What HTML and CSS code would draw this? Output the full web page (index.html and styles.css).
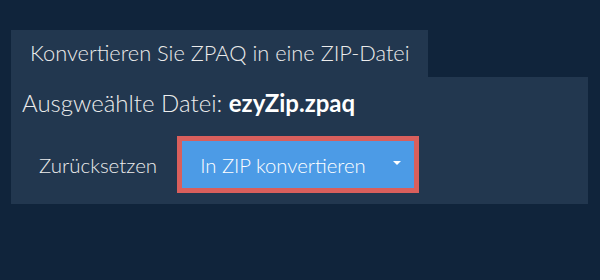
FILE: index.html
```html
<!DOCTYPE html>
<html lang="de">
<head>
<meta charset="utf-8">
<link rel="stylesheet" href="styles.css">
</head>
<body>
<div class="page">
  <div class="tab">Konvertieren Sie ZPAQ in eine ZIP-Datei</div>
  <div class="panel">
    <div class="file">Ausgweählte Datei: <b>ezyZip.zpaq</b></div>
    <div class="actions">
      <span class="reset">Zurücksetzen</span>
      <span class="convert"><span class="label">In ZIP konvertieren</span><span class="caret"></span></span>
    </div>
  </div>
</div>
</body>
</html>
```
FILE: styles.css
```css
html, body {
  margin: 0;
  background: #10243b;
  font-family: Lato, "Noto Sans", sans-serif;
  font-weight: 300;
  color: #ececec;
}
.page {
  padding: 30px 0 0 11px;
}
.tab {
  display: inline-block;
  height: 47px;
  line-height: 45px;
  padding: 0 18px 0 19px;
  font-size: 21.8px;
  background: #22374f;
}
.panel {
  width: 566px;
  height: 116px;
  padding: 0 0 11px 11px;
  background: #22374f;
}
.file {
  padding-top: 12px;
  line-height: 28px;
  font-size: 24px;
}
.file b {
  font-weight: 700;
  color: #ffffff;
}
.actions {
  display: flex;
  align-items: center;
  margin-top: 19px;
  height: 57px;
}
.reset {
  padding: 0 17px;
  font-size: 20.5px;
}
.convert {
  box-sizing: border-box;
  width: 242px;
  height: 57px;
  margin-left: 3px;
  border: 5px solid #d95f5c;
  background: #4c9be6;
  display: flex;
  align-items: center;
  justify-content: space-between;
  padding: 0 13px 0 18px;
  font-size: 20.3px;
  color: #ffffff;
}
.caret {
  width: 0;
  height: 0;
  border-left: 4px solid transparent;
  border-right: 4px solid transparent;
  border-top: 4px solid #ffffff;
  margin-top: -4px;
}
```
